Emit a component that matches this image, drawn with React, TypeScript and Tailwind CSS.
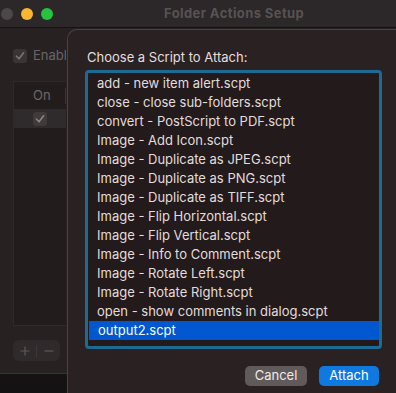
import React from "react";

const scripts = [
  "add - new item alert.scpt",
  "close - close sub-folders.scpt",
  "convert - PostScript to PDF.scpt",
  "Image - Add Icon.scpt",
  "Image - Duplicate as JPEG.scpt",
  "Image - Duplicate as PNG.scpt",
  "Image - Duplicate as TIFF.scpt",
  "Image - Flip Horizontal.scpt",
  "Image - Flip Vertical.scpt",
  "Image - Info to Comment.scpt",
  "Image - Rotate Left.scpt",
  "Image - Rotate Right.scpt",
  "open - show comments in dialog.scpt",
  "output2.scpt",
];

function Check({ color }: { color: string }) {
  return (
    <svg width="10" height="10" viewBox="0 0 10 10" fill="none">
      <path d="M1.5 5.2 L4 7.8 L8.6 1.8" stroke={color} strokeWidth="1.6" strokeLinecap="round" strokeLinejoin="round" />
    </svg>
  );
}

export default function App() {
  return (
    <div
      className="relative w-[396px] h-[393px] overflow-hidden bg-[#151213] text-[13px]"
      style={{ fontFamily: "Inter, 'Noto Sans', sans-serif" }}
    >
      {/* Background window */}
      <div className="flex flex-col w-[396px] h-[374px] bg-[#272122] border-b border-[#3a3435]">
        <div className="flex items-center h-[28px] shrink-0 bg-[#2c2728] border-b border-[#171314] pl-[1px]">
          <div className="flex gap-[8px]">
            <div className="w-[12px] h-[12px] rounded-full bg-[#4c4748]" />
            <div className="w-[12px] h-[12px] rounded-full bg-[#f7b731]" />
            <div className="w-[12px] h-[12px] rounded-full bg-[#27c23f]" />
          </div>
          <span className="ml-[111px] font-bold text-[#575253] tracking-[0.4px]">Folder Actions Setup</span>
        </div>
        <div className="flex flex-col flex-1 pl-[13px] pt-[21px] w-[66px] overflow-hidden">
          <div className="flex items-center gap-[6px] h-[14px]">
            <div className="w-[14px] h-[14px] shrink-0 rounded-[3px] bg-[#3a3435] flex items-center justify-center">
              <Check color="#7a7475" />
            </div>
            <span className="text-[#6b6566] whitespace-nowrap">Enabl</span>
          </div>
          <div className="mt-[18px] h-[245px] w-[120px] shrink-0 border border-[#2f292a] bg-[#221c1d] flex flex-col">
            <div className="h-[27px] flex items-center shrink-0">
              <span className="ml-[19px] text-[#6e6869]">On</span>
              <div className="ml-[14px] w-px h-[16px] bg-[#3a3435]" />
            </div>
            <div className="h-[19px] bg-[#2f2a2b] flex items-center">
              <div className="ml-[19px] w-[14px] h-[14px] rounded-[3px] bg-[#403a3b] flex items-center justify-center">
                <Check color="#8a8485" />
              </div>
            </div>
          </div>
          <div className="mt-[14px] flex items-center w-[47px] h-[21px] shrink-0 rounded-[6px] bg-[#2f2a2b] text-[#5f595a]">
            <div className="flex-1 flex items-center justify-center">
              <svg width="10" height="10" viewBox="0 0 10 10"><path d="M5 0.5V9.5M0.5 5H9.5" stroke="#5f595a" strokeWidth="1.2" /></svg>
            </div>
            <div className="w-px h-[12px] bg-[#3d3738]" />
            <div className="flex-1 flex items-center justify-center">
              <svg width="10" height="10" viewBox="0 0 10 10"><path d="M0.5 5H9.5" stroke="#5f595a" strokeWidth="1.2" /></svg>
            </div>
          </div>
        </div>
      </div>

      {/* Sheet */}
      <div className="absolute left-[67px] top-[29px] w-[345px] h-[380px] rounded-tl-[10px] bg-[#2a2122] border-l border-t border-[#4a4243] pl-[19px] pt-[19px] flex flex-col">
        <div className="text-[#e4dfdf] leading-[16px]">Choose a Script to Attach:</div>
        <div className="mt-[8px] ml-[1px] w-[291px] h-[273px] bg-[#221a1b] outline outline-[3px] outline-[#1d6b95] rounded-[1px] pt-[1px]">
          {scripts.map((s, i) => (
            <div
              key={s}
              className={
                "h-[19px] leading-[19px] pl-[9px] whitespace-nowrap " +
                (i === scripts.length - 1 ? "bg-[#0157cf] text-white ml-[1px]" : "text-[#e2dddd]")
              }
            >
              {s}
            </div>
          ))}
        </div>
        <div className="mt-[20px] flex gap-[12px] pl-[158px]">
          <div className="w-[62px] h-[20px] rounded-[5px] bg-[#615a5b] text-[#eeeaea] flex items-center justify-center">Cancel</div>
          <div className="w-[60px] h-[20px] rounded-[5px] bg-[#1079e0] text-white flex items-center justify-center">Attach</div>
        </div>
      </div>
    </div>
  );
}
